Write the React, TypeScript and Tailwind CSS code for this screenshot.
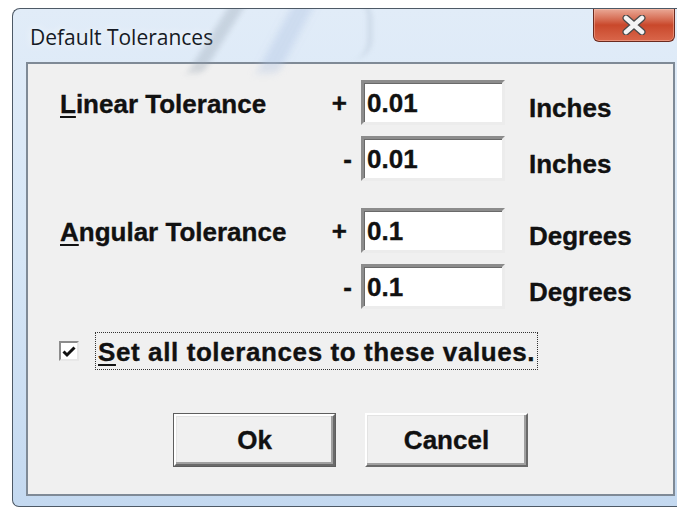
import React from "react";

const ui =
  "font-['Liberation_Sans',Arial,sans-serif] font-bold text-[26px] leading-none text-[#111] [-webkit-text-stroke:0.35px_#111]";

function Field({ value }: { value: string }) {
  return (
    <div className="flex h-[45px] w-[144px] items-center border-[3px] border-t-[#8c8c8c] border-l-[#8c8c8c] border-b-[#ececec] border-r-[#ececec] bg-white pl-[3px] shadow-[inset_1px_1px_0_#6a6a6a]">
      <span className={ui}>{value}</span>
    </div>
  );
}

function Row({
  label,
  mnemonic,
  sign,
  value,
  unit,
}: {
  label?: string;
  mnemonic?: string;
  sign: string;
  value: string;
  unit: string;
}) {
  return (
    <div className="flex h-[45px] items-center">
      <div className={`${ui} w-[268px] pt-[3px]`}>
        {label && (
          <>
            <span className="underline decoration-2 underline-offset-[3px]">{mnemonic}</span>
            {label}
          </>
        )}
      </div>
      <div className={`${ui} w-[24px] text-right ${sign === "+" ? "pr-[5px]" : ""}`}>{sign}</div>
      <div className="ml-[9px]">
        <Field value={value} />
      </div>
      <div className={`${ui} ml-[24px] pt-[11px]`}>{unit}</div>
    </div>
  );
}

function PushButton({ text, isDefault }: { text: string; isDefault?: boolean }) {
  return (
    <button className={`h-[54px] w-[163px] ${isDefault ? "border border-[#5e5e5e]" : ""}`}>
      <div className="flex h-full w-full items-center justify-center border-2 border-t-white border-l-white border-b-[#6a6a6a] border-r-[#6a6a6a] bg-[#f0f0f0] shadow-[inset_-2px_-2px_0_#a0a0a0,inset_1px_1px_0_#e3e3e3]">
        <span className={ui}>{text}</span>
      </div>
    </button>
  );
}

export default function App() {
  return (
    <div className="h-[508px] w-[677px] overflow-hidden bg-white pl-[12px] pt-[8px]">
      <div className="relative flex h-[499px] w-[680px] flex-col overflow-hidden rounded-tl-[8px] rounded-bl-[7px] border border-r-0 border-[#4d5966] bg-gradient-to-b from-[#e1ecf8] via-[#d6e6f6] to-[#c4d9f0]">
        {/* glass reflections on the caption */}
        <div className="pointer-events-none absolute left-[196px] top-[-6px] h-[70px] w-[16px] -skew-x-[32deg] bg-[#8e9aa8]/30 blur-[3px]" />
        <div className="pointer-events-none absolute left-[262px] top-[-6px] h-[70px] w-[22px] -skew-x-[28deg] bg-[#a9bde0]/35 blur-[4px]" />
        <div className="pointer-events-none absolute left-[320px] top-[-10px] h-[60px] w-[40px] rounded-full border-r-[6px] border-[#c2cfe0]/50 blur-[2px]" />

        <div className="flex h-[53px] items-center pl-[17px] pt-[4px]">
          <span className="font-['Open_Sans','Noto_Sans',sans-serif] text-[21px] text-[#151a24] [text-shadow:0_0_8px_#ffffff]">
            Default Tolerances
          </span>
        </div>

        {/* close button */}
        <div className="absolute left-[580px] top-0 flex h-[33px] w-[82px] items-center justify-center rounded-b-[6px] border border-t-0 border-[#6b2a1f] bg-gradient-to-b from-[#e9a896] via-[#c9482b] to-[#d9664a] shadow-[inset_0_0_0_1px_rgba(255,200,180,0.45)]">
          <svg width="26" height="20" viewBox="0 0 26 20">
            <path
              d="M5 3 L21 17 M21 3 L5 17"
              stroke="#4a4a4a"
              strokeWidth="7"
              strokeLinecap="round"
              fill="none"
            />
            <path
              d="M5 3 L21 17 M21 3 L5 17"
              stroke="#f4f4f4"
              strokeWidth="4.5"
              strokeLinecap="round"
              fill="none"
            />
          </svg>
        </div>

        <div className="ml-[13px] flex h-[434px] w-[649px] flex-col border-2 border-[#7f8a96] bg-[#f0f0f0] pt-[16px] pl-[32px]">
          <div className="flex flex-col gap-[11px]">
            <Row mnemonic="L" label="inear Tolerance" sign="+" value="0.01" unit="Inches" />
            <Row sign="-" value="0.01" unit="Inches" />
          </div>
          <div className="mt-[27px] flex flex-col gap-[11px]">
            <Row mnemonic="A" label="ngular Tolerance" sign="+" value="0.1" unit="Degrees" />
            <Row sign="-" value="0.1" unit="Degrees" />
          </div>

          <div className="-ml-[1px] mt-[23px] flex h-[38px] items-center">
            <div className="flex h-[20px] w-[20px] items-center justify-center border-2 border-t-[#8c8c8c] border-l-[#8c8c8c] border-b-[#e8e8e8] border-r-[#e8e8e8] bg-white">
              <svg width="14" height="13" viewBox="0 0 14 13">
                <path d="M1.5 6.5 L5 10 L12.5 2.5" stroke="#111" strokeWidth="3" fill="none" />
              </svg>
            </div>
            <div className="ml-[16px] flex h-[38px] items-center border border-dotted border-[#333] px-[2px] pt-[2px]">
              <span className={`${ui} tracking-[0.6px]`}>
                <span className="underline decoration-2 underline-offset-[3px]">S</span>et all tolerances to these values.
              </span>
            </div>
          </div>

          <div className="-ml-[32px] mt-[43px] flex justify-center gap-[29px]">
            <PushButton text="Ok" isDefault />
            <PushButton text="Cancel" />
          </div>
        </div>
      </div>
    </div>
  );
}
